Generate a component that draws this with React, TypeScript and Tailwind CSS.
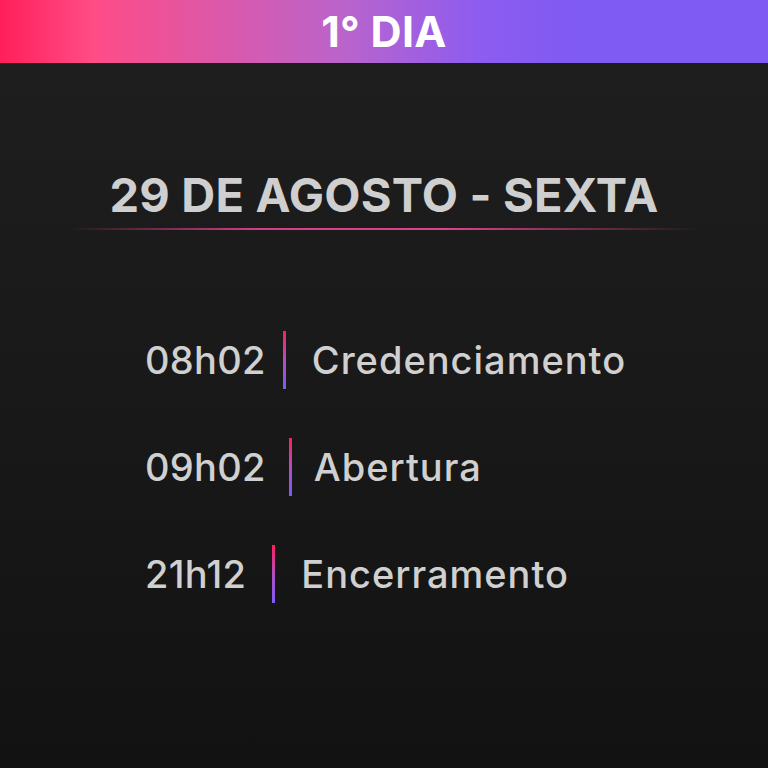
import React from "react";

const rows = [
  { t: "08h02", l: "Credenciamento", bar: "ml-[17px]", txt: "ml-[26px]" },
  { t: "09h02", l: "Abertura", bar: "ml-[23px]", txt: "ml-[22px]" },
  { t: "21h12", l: "Encerramento", bar: "ml-[26px]", txt: "ml-[26px]" },
];

export default function App() {
  return (
    <div
      className="w-[768px] h-[768px] flex flex-col overflow-hidden bg-[linear-gradient(180deg,#1f1f1f_0%,#191919_50%,#121212_100%)]"
      style={{ fontFamily: "Inter, 'Noto Sans', sans-serif" }}
    >
      <div className="h-[63px] flex items-center justify-center bg-[linear-gradient(90deg,#ff1f5a_0%,#ff4c86_12%,#b964cc_45%,#8e5cef_62%,#7f5af3_75%,#7f5af3_100%)]">
        <span className="text-white font-bold text-[43px] leading-none tracking-[0.3px]">1° DIA</span>
      </div>
      <div className="flex flex-col items-center pt-[108px]">
        <div className="text-[#cfcfcf] font-bold text-[47px] leading-none tracking-[0.2px]">29 DE AGOSTO - SEXTA</div>
        <div className="mt-[10px] w-[630px] h-[2px] bg-[linear-gradient(90deg,rgba(255,40,120,0)_0%,#d83c86_30%,#e0418a_60%,rgba(255,40,120,0)_100%)]" />
      </div>
      <div className="flex flex-col gap-[49px] pl-[145px] pt-[101px]">
        {rows.map((r) => (
          <div key={r.t} className="flex items-center h-[58px]">
            <span className="text-[#d0d0d0] text-[38px] leading-none font-medium tracking-[0.3px]">{r.t}</span>
            <div className={`${r.bar} w-[3px] h-[58px] bg-[linear-gradient(180deg,#ff1f5a_0%,#b04fc0_50%,#7f5af3_100%)]`} />
            <span className={`${r.txt} text-[#d0d0d0] text-[38px] leading-none font-medium tracking-[1px]`}>{r.l}</span>
          </div>
        ))}
      </div>
    </div>
  );
}
